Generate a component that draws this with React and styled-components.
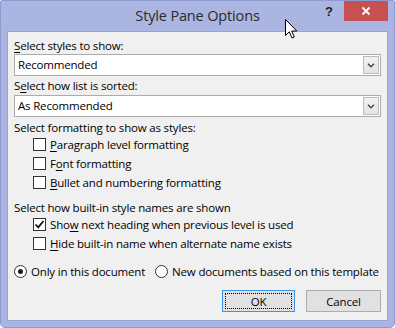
import React from "react";
import styled, { createGlobalStyle } from "styled-components";

const Global = createGlobalStyle`
  html, body { margin: 0; padding: 0; background: #ffffff; }
  body { font-family: "Open Sans", "Noto Sans", "Liberation Sans", sans-serif; }
`;

const Window = styled.div`
  position: relative;
  width: 395px;
  height: 328px;
  box-sizing: border-box;
  background: #aab5e2;
  border: 1px solid #8e9bd2;
  border-radius: 2px 2px 5px 5px;
  display: flex;
  flex-direction: column;
  overflow: hidden;
`;

const TitleBar = styled.div`
  height: 30px;
  display: flex;
  align-items: center;
  justify-content: center;
  position: relative;
`;

const Title = styled.div`
  font-size: 14.5px;
  color: #2b2b2b;
  margin-top: -1px;
  letter-spacing: -0.15px;
`;

const HelpButton = styled.div`
  position: absolute;
  right: 61px;
  top: 3px;
  font-family: "Liberation Sans", sans-serif;
  font-weight: bold;
  font-size: 13px;
  color: #222;
`;

const CloseButton = styled.div`
  position: absolute;
  right: 6px;
  top: 0px;
  width: 44px;
  height: 20px;
  background: #c75050;
  display: flex;
  align-items: center;
  justify-content: center;
`;

const Body = styled.div`
  margin: 0 6px 6px 6px;
  flex: 1;
  background: #f0f0f0;
  border: 1px solid #95a3d8;
  padding: 6px 6px 8px 6px;
  display: flex;
  flex-direction: column;
  font-size: 11.5px;
  letter-spacing: -0.18px;
  color: #000;
`;

const Label = styled.div`
  height: 15px;
  line-height: 15px;
  margin-top: ${(p) => p.$gap || 0}px;
  white-space: nowrap;
`;

const Key = styled.span`
  text-decoration: underline;
  text-underline-offset: 2px;
`;

const Select = styled.div`
  margin-top: ${(p) => p.$gap || 0}px;
  height: 22px;
  box-sizing: border-box;
  border: 1px solid #acacac;
  background: #fff;
  display: flex;
  align-items: stretch;
`;

const SelectValue = styled.div`
  flex: 1;
  padding-left: 3px;
  line-height: 20px;
`;

const SelectArrow = styled.div`
  width: 16px;
  margin: 1px;
  box-sizing: border-box;
  border: 1px solid #bcbcbc;
  background: linear-gradient(#f2f2f2, #e3e3e3);
  display: flex;
  align-items: center;
  justify-content: center;
`;

const OptionRow = styled.label`
  height: 19px;
  display: flex;
  align-items: center;
  padding-left: ${(p) => (p.$indent ? 19 : 0)}px;
  margin-top: ${(p) => p.$gap || 0}px;
  gap: 4px;
  white-space: nowrap;
`;

const Box = styled.span`
  width: 13px;
  height: 13px;
  box-sizing: border-box;
  border: 1px solid #333;
  background: #fff;
  display: inline-flex;
  align-items: center;
  justify-content: center;
  flex: none;
`;

const Radio = styled.span`
  width: 13px;
  height: 13px;
  box-sizing: border-box;
  border: 1px solid #333;
  border-radius: 50%;
  background: #fff;
  display: inline-flex;
  align-items: center;
  justify-content: center;
  flex: none;
  &::after {
    content: "";
    width: 5px;
    height: 5px;
    border-radius: 50%;
    background: ${(p) => (p.$on ? "#1a1a1a" : "transparent")};
  }
`;

const RadioGroup = styled.div`
  display: flex;
  gap: 10px;
  margin-top: 9px;
`;

const Buttons = styled.div`
  display: flex;
  justify-content: flex-end;
  gap: 11px;
  margin-top: 9px;
`;

const Button = styled.div`
  width: ${(p) => p.$w}px;
  height: 22px;
  box-sizing: border-box;
  border: 1px solid ${(p) => (p.$default ? "#3c94e8" : "#adadad")};
  background: #e1e1e1;
  display: flex;
  align-items: center;
  justify-content: center;
  position: relative;
  ${(p) =>
    p.$default &&
    `&::before {
      content: "";
      position: absolute;
      inset: 2px;
      border: 1px dotted #000;
    }`}
`;

const Cursor = styled.svg`
  position: absolute;
  left: 284px;
  top: 18px;
`;

const Check = () => (
  <svg width="11" height="11" viewBox="0 0 11 11">
    <path d="M1.5 5.5 L4.2 8.3 L9.5 2" fill="none" stroke="#111" strokeWidth="1.8" />
  </svg>
);

const Chevron = () => (
  <svg width="8" height="5" viewBox="0 0 8 5">
    <path d="M1 0.8 L4 3.8 L7 0.8" fill="none" stroke="#444" strokeWidth="1.4" />
  </svg>
);

export default function App() {
  return (
    <>
      <Global />
      <Window>
        <TitleBar>
          <Title>Style Pane Options</Title>
          <HelpButton>?</HelpButton>
          <CloseButton>
            <svg width="10" height="10" viewBox="0 0 10 10">
              <path d="M1.5 1.5 L8.5 8.5 M8.5 1.5 L1.5 8.5" stroke="#fff" strokeWidth="1.8" />
            </svg>
          </CloseButton>
        </TitleBar>
        <Body>
          <Label>
            <Key>S</Key>elect styles to show:
          </Label>
          <Select $gap={1}>
            <SelectValue>Recommended</SelectValue>
            <SelectArrow>
              <Chevron />
            </SelectArrow>
          </Select>
          <Label $gap={2}>
            S<Key>e</Key>lect how list is sorted:
          </Label>
          <Select $gap={2}>
            <SelectValue>As Recommended</SelectValue>
            <SelectArrow>
              <Chevron />
            </SelectArrow>
          </Select>
          <Label $gap={3}>Select formatting to show as styles:</Label>
          <OptionRow $indent>
            <Box />
            <span>
              <Key>P</Key>aragraph level formatting
            </span>
          </OptionRow>
          <OptionRow $indent>
            <Box />
            <span>
              F<Key>o</Key>nt formatting
            </span>
          </OptionRow>
          <OptionRow $indent>
            <Box />
            <span>
              <Key>B</Key>ullet and numbering formatting
            </span>
          </OptionRow>
          <Label $gap={8}>Select how built-in style names are shown</Label>
          <OptionRow $indent>
            <Box>
              <Check />
            </Box>
            <span>
              Sho<Key>w</Key> next heading when previous level is used
            </span>
          </OptionRow>
          <OptionRow $indent>
            <Box />
            <span>
              <Key>H</Key>ide built-in name when alternate name exists
            </span>
          </OptionRow>
          <RadioGroup>
            <OptionRow>
              <Radio $on />
              <span>Only in this document</span>
            </OptionRow>
            <OptionRow>
              <Radio />
              <span>New documents based on this template</span>
            </OptionRow>
          </RadioGroup>
          <Buttons>
            <Button $w={73} $default>OK</Button>
            <Button $w={75}>Cancel</Button>
          </Buttons>
        </Body>
        <Cursor width="13" height="21" viewBox="0 0 13 21">
          <path
            d="M0.5 0.5 L0.5 16.5 L4.3 12.8 L7 19 L9.3 18 L6.7 12 L11.8 12 Z"
            fill="#fff"
            stroke="#000"
            strokeWidth="1"
            strokeLinejoin="round"
          />
        </Cursor>
      </Window>
    </>
  );
}
